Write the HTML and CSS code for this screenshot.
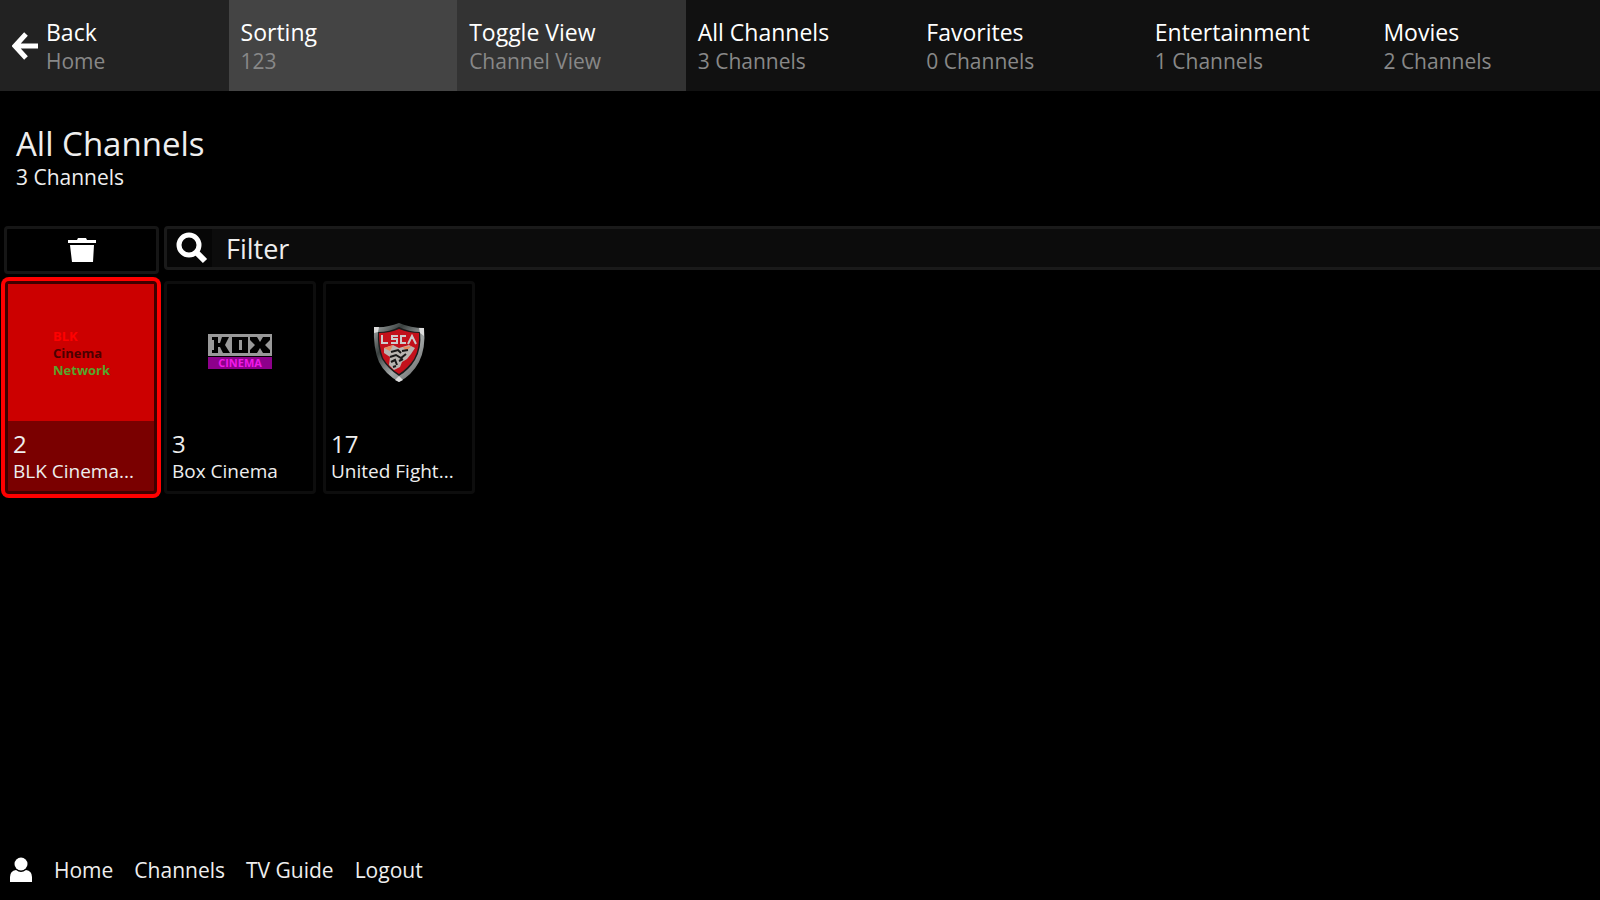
FILE: index.html
```html
<!DOCTYPE html>
<html lang="en">
<head>
  <meta charset="UTF-8">
  <title>All Channels</title>
  <link rel="stylesheet" href="styles.css">
</head>
<body>

<nav class="topbar">
  <a href="#" class="tab back">
    <svg class="back-icon" viewBox="0 0 28 28" aria-hidden="true">
      <path d="M14 2 L3 14 L14 26 M3 14 H26" fill="none" stroke="#fff" stroke-width="5"/>
    </svg>
    <span class="tab-text">
      <span class="tab-title">Back</span>
      <span class="tab-sub">Home</span>
    </span>
  </a>
  <button class="tab sorting">
    <span class="tab-title">Sorting</span>
    <span class="tab-sub">123</span>
  </button>
  <button class="tab toggle">
    <span class="tab-title">Toggle View</span>
    <span class="tab-sub">Channel View</span>
  </button>
  <a href="#" class="tab">
    <span class="tab-title">All Channels</span>
    <span class="tab-sub">3 Channels</span>
  </a>
  <a href="#" class="tab">
    <span class="tab-title">Favorites</span>
    <span class="tab-sub">0 Channels</span>
  </a>
  <a href="#" class="tab">
    <span class="tab-title">Entertainment</span>
    <span class="tab-sub">1 Channels</span>
  </a>
  <a href="#" class="tab">
    <span class="tab-title">Movies</span>
    <span class="tab-sub">2 Channels</span>
  </a>
</nav>

<header class="heading">
  <h1>All Channels</h1>
  <p>3 Channels</p>
</header>

<main>
  <div class="filter-row">
    <button class="clear" aria-label="Clear filter">
      <svg class="trash-icon" viewBox="0 0 28 26" aria-hidden="true">
        <path d="M0 3 H9 L10 1 H18 L19 3 H28 V6 H0 Z M2 8 H26 L25 25 H4 Z" fill="#fff"/>
      </svg>
    </button>
    <div class="search">
      <label for="filter" aria-label="Filter">
        <svg class="search-icon" viewBox="0 0 32 32" aria-hidden="true">
          <circle cx="13" cy="13" r="10" fill="none" stroke="#fff" stroke-width="5"/>
          <path d="M20 20 L29 29" stroke="#fff" stroke-width="6"/>
        </svg>
      </label>
      <input type="text" id="filter" placeholder="Filter">
    </div>
  </div>

  <div class="channels">
    <a href="#" class="card active">
      <span class="card-logo">
        <svg class="logo" viewBox="0 0 68 68" aria-hidden="true">
          <g class="blk">
            <text x="6" y="22" fill="#ff0000">BLK</text>
            <text x="6" y="39" fill="#4a0000">Cinema</text>
            <text x="6" y="56" fill="#56a52c">Network</text>
          </g>
        </svg>
      </span>
      <span class="card-label">
        <span class="card-number">2</span>
        <span class="card-name">BLK Cinema...</span>
      </span>
    </a>
    <a href="#" class="card">
      <span class="card-logo">
        <svg class="logo" viewBox="0 0 68 68" aria-hidden="true">
          <rect x="2" y="15" width="64" height="22" fill="#999"/>
          <!-- K O X letter blocks -->
          <path d="M6 18 h6 v6 h2 l2 -6 h7 l-4 8 5 8 h-7 l-3 -6 h-2 v6 h-6 v-3 h2 v-10 h-2 z" fill="#000"/>
          <path d="M26 18 h16 v16 h-16 z M33 21 v10 h3 v-10 z" fill="#000" fill-rule="evenodd"/>
          <path d="M44 18 h7 l3 5 3 -5 h7 v3 l-5 5 5 5 v3 h-7 l-3 -5 -3 5 h-7 v-3 l5 -5 -5 -5 z" fill="#000"/>
          <rect x="2" y="38" width="64" height="12" fill="#8d008b"/>
          <text class="box-sub" x="34" y="48" fill="#f01ae8">CINEMA</text>
        </svg>
      </span>
      <span class="card-label">
        <span class="card-number">3</span>
        <span class="card-name">Box Cinema</span>
      </span>
    </a>
    <a href="#" class="card">
      <span class="card-logo">
        <svg class="logo" viewBox="0 0 68 68" aria-hidden="true">
          <defs>
            <linearGradient id="steel" x1="0" y1="0" x2="1" y2="1">
              <stop offset="0" stop-color="#b0b4b4"/>
              <stop offset="0.3" stop-color="#39403f"/>
              <stop offset="0.6" stop-color="#a4a8a8"/>
              <stop offset="1" stop-color="#555"/>
            </linearGradient>
          </defs>
          <g transform="translate(0 -1)">
            <path d="M9 9 Q22 10 34 5 Q46 10 59 10 Q61 30 54 44 Q47 57 34 64 Q20 56 14 44 Q8 30 9 9 Z" fill="url(#steel)"/>
            <path d="M13 14 Q25 14 34 9 Q44 14 55 14 Q57 30 50 42 Q44 52 34 58 Q23 51 17 41 Q12 29 13 14 Z" fill="#1c1c1c"/>
            <path d="M14 15 Q25 15 34 11 Q44 15 54 15 Q55 30 49 41 Q43 50 34 56 Q24 50 18 40 Q14 29 14 15 Z" fill="#c3111b"/>
            <path d="M17 17 V25 H23 M33 18 H27 V21 H32 V25 H26 M41 18 H36 V25 H41 M43 26 L47 18 L51 26" fill="none" stroke="#ccc" stroke-width="2"/>
            <path d="M19 30 L28 27 L34 30 L44 27 L50 30 L46 36 L42 41 L37 44 L35 49 L29 52 L24 47 L25 39 L19 35 Z" fill="#b9b5b1"/>
            <path d="M19 30 L28 27 L25 33 Z M38 29 L47 28 L41 33 Z" fill="#e9895c"/>
            <path d="M26 34 L33 32 L36 35 M37 33 L43 32 M25 39 L31 37 L36 40 L41 36 M26 44 L30 42 L32 47 M34 43 L38 41 M28 49 L31 48" fill="none" stroke="#191919" stroke-width="2"/>
            <path d="M30 62 L34 64 L38 62 L34 58 Z M9 9 L14 9 L13 14 L9 15 Z M54 10 H59 V18 L55 15 Z" fill="#ddd"/>
          </g>
        </svg>
      </span>
      <span class="card-label">
        <span class="card-number">17</span>
        <span class="card-name">United Fight...</span>
      </span>
    </a>
  </div>
</main>

<footer class="bottombar">
  <svg class="user-icon" viewBox="0 0 24 26" aria-hidden="true">
    <circle cx="12" cy="7" r="6.5" fill="#fff"/>
    <path d="M1 25 V20 Q1 14 7 13 Q12 17 17 13 Q23 14 23 20 V25 Z" fill="#fff"/>
  </svg>
  <a href="#">Home</a>
  <a href="#">Channels</a>
  <a href="#">TV Guide</a>
  <a href="#">Logout</a>
</footer>

</body>
</html>
```

FILE: styles.css
```css
* {
  box-sizing: border-box;
}

body {
  display: flex;
  flex-direction: column;
  min-height: 100vh;
  margin: 0;
  background: #000;
  color: #eee;
  font-family: 'Open Sans', 'Noto Sans', sans-serif;
  overflow-x: hidden;
}

a {
  color: inherit;
  text-decoration: none;
}

button,
input {
  font-family: inherit;
  color: inherit;
  border: none;
  margin: 0;
}

svg {
  display: block;
}

.topbar {
  display: grid;
  grid-template-columns: repeat(7, 1fr);
  background: #111;
}

.tab {
  display: block;
  padding: 16px 12px;
  background: #111;
  text-align: left;
}

.tab-title,
.tab-sub {
  display: block;
}

.tab-title {
  font-size: 23px;
  font-weight: 500;
  line-height: 32px;
  color: #fff;
}

.tab-sub {
  font-size: 21px;
  line-height: 27px;
  color: #888;
}

.back {
  display: flex;
  align-items: center;
  gap: 6px;
  background: #222;
}

.back-icon {
  width: 28px;
  height: 28px;
}

.sorting {
  background: #444;
}

.toggle {
  background: #333;
}

.heading {
  padding: 32px 16px 37px;
}

.heading h1 {
  margin: 0;
  font-size: 33px;
  font-weight: 400;
  line-height: 42px;
}

.heading p {
  margin: 0;
  font-size: 21px;
  font-weight: 500;
  line-height: 24px;
}

.filter-row {
  display: flex;
  align-items: flex-start;
  gap: 5px;
  padding-left: 4px;
  margin-right: -8px;
}

.clear {
  display: flex;
  justify-content: center;
  align-items: center;
  width: 155px;
  height: 48px;
  padding: 0;
  background: #000;
  border: 3px solid #161616;
  border-radius: 4px;
}

.trash-icon {
  width: 28px;
  height: 26px;
}

.search {
  display: flex;
  align-items: center;
  flex: 1;
  height: 44px;
  background: #060606;
  border: 3px solid #1a1a1a;
  border-radius: 4px;
}

.search label {
  padding: 0 4px 0 9px;
}

.search-icon {
  width: 32px;
  height: 32px;
}

.search input {
  flex: 1;
  height: 100%;
  padding: 0 14px;
  background: #0c0c0c;
  font-size: 27px;
  outline: none;
}

.search input::placeholder {
  color: #eee;
  opacity: 1;
}

.channels {
  display: flex;
  gap: 7px;
  padding: 7px 5px;
}

.card {
  width: 152px;
  border: 3px solid #0d0d0d;
  border-radius: 4px;
}

.card-logo {
  display: flex;
  justify-content: center;
  align-items: center;
  height: 137px;
}

.logo {
  width: 68px;
  height: 68px;
}

.blk {
  font: bold 13px 'Open Sans', sans-serif;
}

.box-sub {
  font: bold 11px 'Open Sans', sans-serif;
  text-anchor: middle;
}

.card-label {
  display: block;
  padding: 9px 5px 6px;
}

.card-number,
.card-name {
  display: block;
  white-space: nowrap;
}

.card-number {
  font-size: 24px;
  line-height: 28px;
}

.card-name {
  font-size: 19px;
  font-weight: 500;
  line-height: 27px;
}

.active {
  border-color: #400000;
  background: #7a0000;
  box-shadow: 0 0 0 4px #ff0000;
}

.active .card-logo {
  background: #cc0000;
}

.bottombar {
  display: flex;
  align-items: center;
  gap: 21px;
  margin-top: auto;
  padding: 0 9px 16px;
  font-size: 21px;
  line-height: 28px;
}

.user-icon {
  width: 24px;
  height: 26px;
}
```
